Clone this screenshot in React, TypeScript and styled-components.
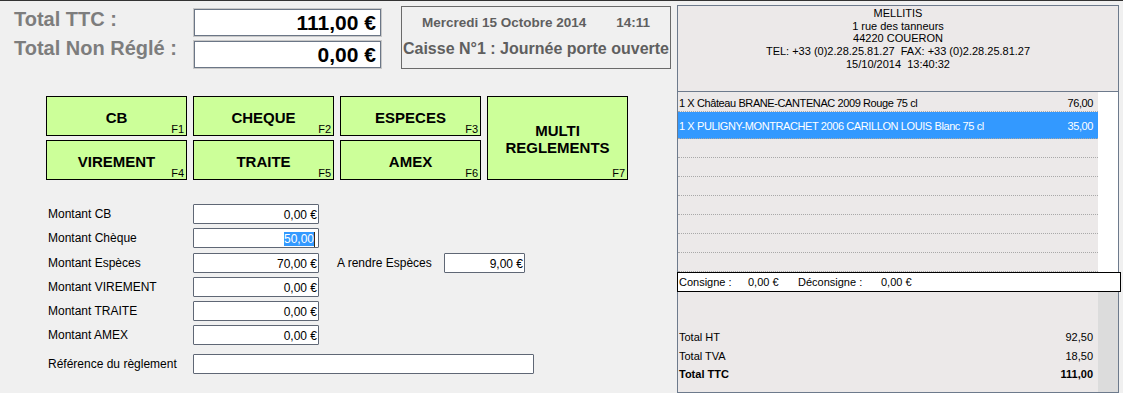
import styled, { createGlobalStyle } from "styled-components";

const GlobalStyle = createGlobalStyle`
  html, body { margin: 0; padding: 0; background: #f0f0f0; }
  body { font-family: "Liberation Sans", Arial, sans-serif; }
`;

const Screen = styled.div`
  width: 1123px;
  height: 393px;
  box-sizing: border-box;
  border-top: 1px solid #333;
  background: #f0f0f0;
  display: grid;
  grid-template-columns: 677px 442px;
  overflow: hidden;
`;

const LeftPane = styled.div`
  display: flex;
  flex-direction: column;
`;

const TopBar = styled.div`
  display: flex;
  align-items: flex-start;
  padding-left: 14px;
`;

const TotalsLabels = styled.div`
  width: 180px;
  padding-top: 6px;
  display: flex;
  flex-direction: column;
  gap: 5px;
`;

const TotalLabel = styled.div`
  font-size: 20px;
  line-height: 24px;
  font-weight: bold;
  color: #7d7d7d;
  white-space: nowrap;
`;

const TotalsValues = styled.div`
  width: 187px;
  padding-top: 8px;
  display: flex;
  flex-direction: column;
  gap: 5px;
`;

const TotalBox = styled.div`
  height: 27px;
  box-sizing: border-box;
  border: 1px solid #6b7686;
  box-shadow: 0 0 0 1px #c8c8c8;
  background: #fff;
  text-align: right;
  padding-right: 4px;
  font-size: 21px;
  line-height: 26px;
  font-weight: bold;
  color: #000;
`;

const SessionBox = styled.div`
  margin-left: 20px;
  margin-top: 5px;
  width: 270px;
  height: 63px;
  box-sizing: border-box;
  border: 1px solid #6a6a6a;
  padding-top: 8px;
  display: flex;
  flex-direction: column;
  align-items: center;
  gap: 8px;
  color: #5f5f5f;
  font-weight: bold;
`;

const SessionDate = styled.div`
  font-size: 13.5px;
  line-height: 16px;
  white-space: nowrap;
`;

const SessionTime = styled.span`
  margin-left: 30px;
`;

const SessionTitle = styled.div`
  font-size: 16px;
  line-height: 20px;
  white-space: nowrap;
`;

const PayGrid = styled.div`
  margin: 27px 0 0 46px;
  display: grid;
  grid-template-columns: repeat(4, 141px);
  grid-template-rows: 40px 40px;
  column-gap: 6px;
  row-gap: 4px;
`;

const PayButton = styled.div<{ $tall?: boolean }>`
  position: relative;
  box-sizing: border-box;
  border: 1px solid #000;
  background: #ccff99;
  display: flex;
  align-items: center;
  justify-content: center;
  text-align: center;
  padding-top: 2px;
  font-size: 15px;
  line-height: 17px;
  font-weight: bold;
  color: #000;
  grid-column: ${(p) => (p.$tall ? "4" : "auto")};
  grid-row: ${(p) => (p.$tall ? "1 / span 2" : "auto")};
`;

const FKey = styled.span`
  position: absolute;
  right: 2px;
  bottom: 0;
  font-size: 11px;
  line-height: 11px;
  font-weight: normal;
  color: #000;
`;

const Form = styled.div`
  margin-top: 24px;
  padding-left: 48px;
  display: flex;
  flex-direction: column;
  row-gap: 4.3px;
`;

const FormRow = styled.div<{ $gapTop?: number }>`
  display: flex;
  align-items: center;
  height: 20px;
  margin-top: ${(p) => p.$gapTop ?? 0}px;
`;

const FieldLabel = styled.div<{ $width: number; $indent?: number }>`
  width: ${(p) => p.$width}px;
  margin-left: ${(p) => p.$indent ?? 0}px;
  font-size: 12px;
  color: #000;
  white-space: nowrap;
`;

const Field = styled.div<{ $width: number; $pad?: number }>`
  width: ${(p) => p.$width}px;
  height: 20px;
  box-sizing: border-box;
  border: 1px solid #5f6775;
  border-radius: 1px;
  background: #fff;
  padding: 3px ${(p) => p.$pad ?? 1}px 0 0;
  text-align: right;
  font-size: 12px;
  line-height: 15px;
  color: #000;
  white-space: nowrap;
`;

const Selection = styled.span`
  display: inline-block;
  background: #3399ff;
  color: #fff;
  line-height: 14px;
  vertical-align: top;
`;

const Caret = styled.span`
  display: inline-block;
  width: 1px;
  height: 15px;
  background: #3a2a10;
  vertical-align: top;
`;

const Ticket = styled.div`
  margin-top: 4px;
  height: 388px;
  box-sizing: border-box;
  border: 1px solid #6d7a8c;
  background: #ece9e9;
  display: flex;
  flex-direction: column;
  font-size: 11px;
  color: #000;
`;

const TicketHeader = styled.div`
  height: 86px;
  box-sizing: border-box;
  border-bottom: 1px solid #6d7a8c;
  padding-top: 1px;
  text-align: center;
  line-height: 12.7px;
  white-space: pre;
`;

const TicketBody = styled.div`
  display: grid;
  grid-template-columns: 420px 20px;
`;

const Lines = styled.div`
  display: flex;
  flex-direction: column;
`;

const ScrollGap = styled.div<{ $shade: string }>`
  background: ${(p) => p.$shade};
`;

const Line = styled.div<{ $height: number; $selected?: boolean }>`
  height: ${(p) => p.$height}px;
  box-sizing: border-box;
  border-bottom: 1px dotted #a9a9a9;
  padding: 2px 5px 0 1px;
  display: flex;
  align-items: center;
  justify-content: space-between;
  letter-spacing: -0.4px;
  background: ${(p) => (p.$selected ? "#3399ff" : "transparent")};
  color: ${(p) => (p.$selected ? "#fff" : "#000")};
  white-space: nowrap;
`;

const Deposit = styled.div`
  height: 20px;
  box-sizing: border-box;
  border: 1px solid #000;
  margin: 0 -3px 0 -1px;
  background: #fff;
  display: flex;
  align-items: center;
  padding-left: 1px;
  white-space: nowrap;
`;

const DepositCell = styled.span<{ $width: number }>`
  width: ${(p) => p.$width}px;
`;

const Totals = styled.div`
  height: 100px;
  box-sizing: border-box;
  display: flex;
  flex-direction: column;
  justify-content: flex-end;
  padding: 0 5px 8px 1px;
`;

const TotalLine = styled.div<{ $strong?: boolean }>`
  display: flex;
  justify-content: space-between;
  line-height: 18.6px;
  font-weight: ${(p) => (p.$strong ? "bold" : "normal")};
`;

const payments = [
  { label: "CB", key: "F1" },
  { label: "CHEQUE", key: "F2" },
  { label: "ESPECES", key: "F3" },
  { label: "VIREMENT", key: "F4" },
  { label: "TRAITE", key: "F5" },
  { label: "AMEX", key: "F6" },
];

const items = [
  { text: "1 X Château BRANE-CANTENAC 2009 Rouge 75 cl", price: "76,00" },
  { text: "1 X PULIGNY-MONTRACHET 2006 CARILLON LOUIS Blanc 75 cl", price: "35,00", selected: true },
];

export default function App() {
  return (
    <>
      <GlobalStyle />
      <Screen>
        <LeftPane>
          <TopBar>
            <TotalsLabels>
              <TotalLabel>Total TTC :</TotalLabel>
              <TotalLabel>Total Non Réglé :</TotalLabel>
            </TotalsLabels>
            <TotalsValues>
              <TotalBox>111,00 €</TotalBox>
              <TotalBox>0,00 €</TotalBox>
            </TotalsValues>
            <SessionBox>
              <SessionDate>
                Mercredi 15 Octobre 2014<SessionTime>14:11</SessionTime>
              </SessionDate>
              <SessionTitle>Caisse N°1 : Journée porte ouverte</SessionTitle>
            </SessionBox>
          </TopBar>

          <PayGrid>
            {payments.map((p) => (
              <PayButton key={p.key}>
                {p.label}
                <FKey>{p.key}</FKey>
              </PayButton>
            ))}
            <PayButton $tall>
              MULTI
              <br />
              REGLEMENTS
              <FKey>F7</FKey>
            </PayButton>
          </PayGrid>

          <Form>
            <FormRow>
              <FieldLabel $width={145}>Montant CB</FieldLabel>
              <Field $width={126}>0,00 €</Field>
            </FormRow>
            <FormRow>
              <FieldLabel $width={145}>Montant Chèque</FieldLabel>
              <Field $width={126} $pad={3}>
                <Selection>50,00</Selection>
                <Caret />
              </Field>
            </FormRow>
            <FormRow>
              <FieldLabel $width={145}>Montant Espèces</FieldLabel>
              <Field $width={126}>70,00 €</Field>
              <FieldLabel $width={107} $indent={18}>A rendre Espèces</FieldLabel>
              <Field $width={81}>9,00 €</Field>
            </FormRow>
            <FormRow>
              <FieldLabel $width={145}>Montant VIREMENT</FieldLabel>
              <Field $width={126}>0,00 €</Field>
            </FormRow>
            <FormRow>
              <FieldLabel $width={145}>Montant TRAITE</FieldLabel>
              <Field $width={126}>0,00 €</Field>
            </FormRow>
            <FormRow>
              <FieldLabel $width={145}>Montant AMEX</FieldLabel>
              <Field $width={126}>0,00 €</Field>
            </FormRow>
            <FormRow $gapTop={4}>
              <FieldLabel $width={145}>Référence du règlement</FieldLabel>
              <Field $width={341} />
            </FormRow>
          </Form>
        </LeftPane>

        <Ticket>
          <TicketHeader>
            {"MELLITIS\n1 rue des tanneurs\n44220 COUERON\nTEL: +33 (0)2.28.25.81.27  FAX: +33 (0)2.28.25.81.27\n15/10/2014  13:40:32"}
          </TicketHeader>
          <TicketBody>
            <Lines>
              {items.map((it, i) => (
                <Line key={i} $height={it.selected ? 27 : 20} $selected={it.selected}>
                  <span>{it.text}</span>
                  <span>{it.price}</span>
                </Line>
              ))}
              {Array.from({ length: 7 }).map((_, i) => (
                <Line key={`e${i}`} $height={19} />
              ))}
            </Lines>
            <ScrollGap $shade="#ffffff" />
          </TicketBody>
          <Deposit>
            <DepositCell $width={69}>Consigne :</DepositCell>
            <DepositCell $width={50}>0,00 €</DepositCell>
            <DepositCell $width={83}>Déconsigne :</DepositCell>
            <DepositCell $width={60}>0,00 €</DepositCell>
          </Deposit>
          <TicketBody>
            <Totals>
              <TotalLine>
                <span>Total HT</span>
                <span>92,50</span>
              </TotalLine>
              <TotalLine>
                <span>Total TVA</span>
                <span>18,50</span>
              </TotalLine>
              <TotalLine $strong>
                <span>Total TTC</span>
                <span>111,00</span>
              </TotalLine>
            </Totals>
            <ScrollGap $shade="#dcdcdc" />
          </TicketBody>
        </Ticket>
      </Screen>
    </>
  );
}
